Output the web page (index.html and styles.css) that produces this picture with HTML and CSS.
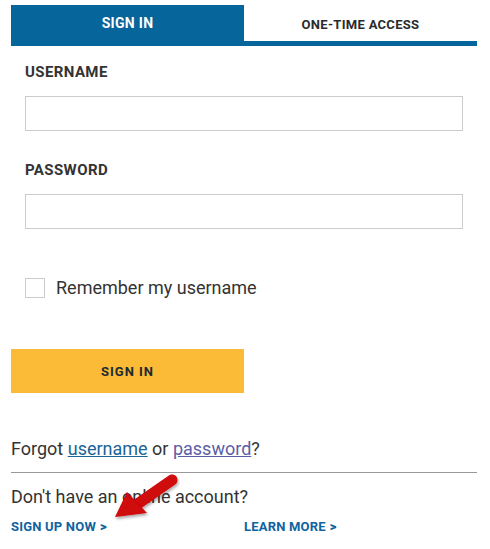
FILE: index.html
```html
<!DOCTYPE html>
<html>
<head>
<meta charset="utf-8">
<link rel="stylesheet" href="styles.css">
</head>
<body>
<div class="panel">
  <div class="tabs">
    <div class="tab active">SIGN IN</div>
    <div class="tab other">ONE-TIME ACCESS</div>
  </div>
  <form class="form">
    <label class="label">USERNAME</label>
    <input class="field" type="text">
    <label class="label pw">PASSWORD</label>
    <input class="field" type="password">
    <div class="remember">
      <span class="box"></span>
      <span>Remember my username</span>
    </div>
  </form>
  <button class="btn">SIGN IN</button>
  <p class="forgot">Forgot <a class="lnk" href="#">username</a> or <a class="lnk visited" href="#">password</a>?</p>
  <hr class="rule">
  <p class="noacct">Don't have an online account?</p>
  <div class="links">
    <a class="cta" href="#">SIGN UP NOW<span class="chev">&gt;</span></a>
    <a class="cta" href="#">LEARN MORE<span class="chev">&gt;</span></a>
  </div>
  <svg class="arrow" width="80" height="60" viewBox="0 0 80 60">
    <defs>
      <filter id="sh" x="-30%" y="-30%" width="160%" height="160%">
        <feDropShadow dx="1" dy="2" stdDeviation="1.5" flood-color="#000" flood-opacity="0.35"/>
      </filter>
    </defs>
    <g filter="url(#sh)">
      <line x1="72" y1="10" x2="36" y2="35" stroke="#d0070b" stroke-width="11" stroke-linecap="round"/>
      <polygon points="15,47 27,22 47,43" fill="#d0070b"/>
    </g>
  </svg>
</div>
</body>
</html>
```
FILE: styles.css
```css
* { box-sizing: border-box; }
html, body { margin: 0; padding: 0; background: #fff; }
body { font-family: Roboto, "Liberation Sans", sans-serif; color: #333; }
.panel { position: relative; width: 490px; height: 549px; padding: 5px 13px 0 11px; }
.tabs { display: flex; border-bottom: 5px solid #06659a; height: 41px; }
.tab { flex: 1; display: flex; align-items: center; justify-content: center; font-weight: 700; font-size: 14px; letter-spacing: 0.3px; color: #2b2b2b; }
.tab.other { font-size: 13px; padding-top: 3px; }
.tab.active { background: #06659a; color: #fff; padding-bottom: 5px; margin-bottom: -5px; height: 41px; }
.form { display: flex; flex-direction: column; padding: 0 14px; margin: 0; }
.label { font-weight: 700; font-size: 15px; letter-spacing: 0.4px; color: #333; margin-top: 18px; line-height: 16px; }
.label.pw { margin-top: 31px; }
.field { height: 35px; border: 1px solid #ccc; margin-top: 16px; width: 438px; background: #fff; }
.remember { display: flex; align-items: center; margin-top: 49px; font-size: 18px; line-height: 20px; color: #333; }
.box { width: 20px; height: 20px; border: 1px solid #ccc; margin-right: 11px; }
.btn { display: block; width: 233px; height: 44px; margin-top: 51px; background: #fbbb37; border: 0; font-family: Roboto, "Liberation Sans", sans-serif; font-weight: 700; font-size: 13px; letter-spacing: 1px; color: #1d2a33; }
.forgot { margin: 46px 0 0; font-size: 18px; line-height: 20px; color: #333; }
.lnk { color: #1a6496; }
.lnk.visited { color: #5b5ea6; }
.rule { border: 0; border-top: 1px solid #999; margin: 13px 0 0; }
.noacct { margin: 14px 0 0; font-size: 18px; line-height: 20px; color: #333; }
.links { display: flex; margin-top: 12px; }
.cta { width: 233px; font-weight: 700; font-size: 13px; letter-spacing: 0.2px; color: #0e63a0; text-decoration: none; }
.chev { font-size: 13px; font-weight: 900; margin-left: 4px; }
.arrow { position: absolute; left: 100px; top: 470px; }
```
